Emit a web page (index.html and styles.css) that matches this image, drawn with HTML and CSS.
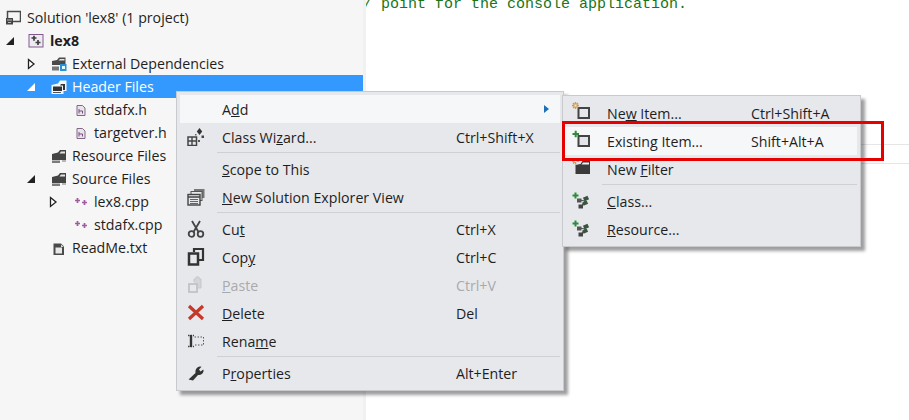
FILE: index.html
```html
<!DOCTYPE html>
<html lang="en">
<head>
<meta charset="utf-8">
<title>Solution Explorer context menu</title>
<link rel="stylesheet" href="styles.css">
</head>
<body>
<svg class="defs" aria-hidden="true">
  <symbol id="i-solution" viewBox="0 0 16 16"><path d="M2.500 8.500V1.500h13v10H8" fill="none" stroke="#4a4a4a" stroke-width="1.500"/><rect x="1" y="8" width="7" height="6.500" fill="#444"/><path d="M2 10h5M3 12.500h3" stroke="#bbb"/></symbol>
  <symbol id="i-project" viewBox="0 0 16 16"><rect x="1" y="1.500" width="14" height="12.500" fill="#ececf0" stroke="#86588f"/><path d="M3.500 5h5M6 2.800v5M7.500 9.500h5M10 7v5" stroke="#3f3f3f" stroke-width="1.700"/></symbol>
  <symbol id="i-extdep" viewBox="0 0 16 16"><path d="M1 5l5-1 2-2.500h6.500V9H1z" fill="#4a4a4a"/><path d="M7.500 4.500h6V3H9z" fill="#e4e4e4"/><path d="M1 10.500h7v4H1z" fill="#777"/><rect x="9" y="8" width="6.500" height="7" fill="#2d8fd5"/><rect x="11" y="10" width="3" height="3" fill="#dff"/></symbol>
  <symbol id="i-folder" viewBox="0 0 16 16"><path d="M1 6l6-1.500 2-2.500h6v10H1z" fill="#444"/><path d="M8.500 5.500l1.500-2h4v2z" fill="#e4e4e4"/><path d="M1 12.500h8v2.500H1z" fill="#7c7c7c"/><path d="M11 13h4" stroke="#777"/></symbol>
  <symbol id="i-folder-sel" viewBox="0 0 16 16"><path d="M.5 6l6.500-1.500 2-3h6.500V12h-3v3H.5z" fill="#f2f6fa"/><path d="M2 7.500h9v4.500H2z" fill="#333"/><path d="M10 5h4v6h-2V6.500H9z" fill="#333"/><path d="M2 13.500h8" stroke="#555"/></symbol>
  <symbol id="i-hfile" viewBox="0 0 16 16"><path d="M4 3.500h5.500l2.500 2.500v7.500H4z" fill="#e9e4ea" stroke="#7f6a85"/><path d="M6 7v4.500M9.500 9v2.500M6 9h3.500" stroke="#7b4b86"/></symbol>
  <symbol id="i-cpp" viewBox="0 0 16 16"><path d="M2 6.500h5M4.500 4v5M9 8.500h5M11.500 6v5" stroke="#a25ba0" stroke-width="1.700"/></symbol>
  <symbol id="i-txt" viewBox="0 0 16 16"><path d="M2.500 3.500H10l3 3V15H2.500z" fill="#4a4a4a"/><rect x="4.500" y="7.500" width="6.500" height="6" fill="#e8e8e8"/><path d="M10 4.500v2.500h2.500" fill="#ddd"/></symbol>
  <symbol id="i-wizard" viewBox="0 0 18 18"><path d="M12.500 0l2.700 3.500-2.700 3.500-2.700-3.500z" fill="#333"/><rect x="1" y="9" width="8.500" height="8.500" fill="none" stroke="#444" stroke-width="1.500"/><path d="M1 13h8M5 9v8" stroke="#444" stroke-width="1.400"/><rect x="14.500" y="7.500" width="2.500" height="2.500" fill="#444"/><rect x="11" y="12" width="2" height="2" fill="#555"/><rect x="8" y="6" width="1.500" height="1.500" fill="#666"/></symbol>
  <symbol id="i-newview" viewBox="0 0 18 18"><rect x="7" y="1" width="10.500" height="9" fill="#777"/><rect x="4" y="3.500" width="11" height="9" fill="#e7e8ec" stroke="#555"/><rect x="1" y="6.500" width="12" height="10.500" fill="#e7e8ec" stroke="#444" stroke-width="1.400"/><path d="M1 9h12" stroke="#444" stroke-width="1.500"/><path d="M3 11.500h8M3 13.500h8M3 15.500h8" stroke="#666"/></symbol>
  <symbol id="i-cut" viewBox="0 0 18 18"><path d="M5 1l6.500 11M13 1L6.500 12" fill="none" stroke="#444" stroke-width="1.800"/><circle cx="4.500" cy="14" r="2.800" fill="none" stroke="#444" stroke-width="1.800"/><circle cx="13.500" cy="14" r="2.800" fill="none" stroke="#444" stroke-width="1.800"/></symbol>
  <symbol id="i-copy" viewBox="0 0 18 18"><path d="M7 4V1h9v11h-5" fill="none" stroke="#333" stroke-width="2.200"/><rect x="2" y="5.500" width="9" height="11" fill="#e7e8ec" stroke="#333" stroke-width="2.500"/></symbol>
  <symbol id="i-paste" viewBox="0 0 18 18"><path d="M7 6V3h2V1h3v2h2v9h-3" fill="#d4d5d8" stroke="#c6c7ca"/><rect x="2" y="8" width="8" height="8" fill="#e7e8ec" stroke="#c2c3c6" stroke-width="1.800"/></symbol>
  <symbol id="i-delete" viewBox="0 0 18 18"><path d="M2 2l14 13M16 2L2 15" stroke="#c5392b" stroke-width="3.200"/></symbol>
  <symbol id="i-rename" viewBox="0 0 18 18"><path d="M7.500 5h9v8h-9" fill="none" stroke="#555" stroke-dasharray="1.500 1.500"/><path d="M1 3.500h6M1 14.500h6" stroke="#444" stroke-width="1.600" stroke-dasharray="1.500 1"/><path d="M4 3v12" stroke="#333" stroke-width="2.400"/></symbol>
  <symbol id="i-wrench" viewBox="0 0 18 18"><path d="M1.500 15.500l7-6.500C8 6 9.500 3 13 2.500l1.500.3-2.500 2.800 1.500 2 2.800-2 .3 1.500C16 10 13.500 11.500 11 11l-5 5.500z" fill="#333"/></symbol>
  <symbol id="i-newitem" viewBox="0 0 18 18"><rect x="6.500" y="6" width="10.500" height="10" fill="#e7e8ec" stroke="#444" stroke-width="2"/><path d="M3.500 0v2.500M3.500 4.500V7M0 3.500h2.500M4.500 3.500H7M1 1l1.500 1.500M4.500 4.500L6 6M6 1L4.500 2.500M2.500 4.500L1 6" stroke="#d49a48" stroke-width="1.400"/></symbol>
  <symbol id="i-existing" viewBox="0 0 18 18"><rect x="6.500" y="6" width="10.500" height="10" fill="#e4e5e8" stroke="#444" stroke-width="2"/><path d="M.5 4h6.500M3.700 .8v6.400" stroke="#2f8a3a" stroke-width="2"/></symbol>
  <symbol id="i-newfilter" viewBox="0 0 18 18"><path d="M3.500 7l5-1 2-3H18v13H3.500z" fill="#3a3a3a"/><path d="M9.500 6.500l1.500-2h6v2z" fill="#eee"/><path d="M3.500 0v2.500M3.500 4v2.500M0 3h2.500M4.500 3H7M1 .8l1.500 1.500M6 .8L4.500 2.300M2.500 4L1 5.500" stroke="#d49a48" stroke-width="1.400"/></symbol>
  <symbol id="i-class" viewBox="0 0 18 18"><path d="M.5 3.500h6M3.500 .5v6" stroke="#2f8a3a" stroke-width="2"/><path d="M7 8l6 1-4 6" fill="none" stroke="#555" stroke-width="1.200"/><rect x="11.500" y="4.500" width="5" height="4" transform="rotate(-25 14 6.500)" fill="#37553f"/><rect x="5" y="6.500" width="4.500" height="4" fill="#555"/><rect x="10.500" y="9.500" width="5" height="3.500" transform="rotate(-25 13 11)" fill="#37553f"/><rect x="6.500" y="12.500" width="4.500" height="4" fill="#444"/></symbol>
  <symbol id="a-open" viewBox="0 0 16 16"><path d="M12 4v8H4z"/></symbol>
  <symbol id="a-closed" viewBox="0 0 16 16"><path d="M5.500 3.500l5.500 4.500-5.500 4.500z" fill="#fff" stroke="#222" stroke-width="1.300"/></symbol>
</svg>

<div class="window">
  <aside class="tree">
    <div class="row lvl0"><span class="ic"><svg class="icon"><use href="#i-solution"/></svg></span><span>Solution 'lex8' (1 project)</span></div>
    <div class="row lvl1"><svg class="exp"><use href="#a-open"/></svg><span class="ic ic-wide"><svg class="icon"><use href="#i-project"/></svg></span><b>lex8</b></div>
    <div class="row lvl2"><svg class="exp"><use href="#a-closed"/></svg><span class="ic"><svg class="icon"><use href="#i-extdep"/></svg></span><span>External Dependencies</span></div>
    <div class="row lvl2 selected"><svg class="exp"><use href="#a-open"/></svg><span class="ic"><svg class="icon"><use href="#i-folder-sel"/></svg></span><span>Header Files</span></div>
    <div class="row lvl3"><span class="exp"></span><span class="ic"><svg class="icon"><use href="#i-hfile"/></svg></span><span>stdafx.h</span></div>
    <div class="row lvl3"><span class="exp"></span><span class="ic"><svg class="icon"><use href="#i-hfile"/></svg></span><span>targetver.h</span></div>
    <div class="row lvl2"><span class="exp"></span><span class="ic"><svg class="icon"><use href="#i-folder"/></svg></span><span>Resource Files</span></div>
    <div class="row lvl2"><svg class="exp"><use href="#a-open"/></svg><span class="ic"><svg class="icon"><use href="#i-folder"/></svg></span><span>Source Files</span></div>
    <div class="row lvl3"><svg class="exp"><use href="#a-closed"/></svg><span class="ic"><svg class="icon"><use href="#i-cpp"/></svg></span><span>lex8.cpp</span></div>
    <div class="row lvl3"><span class="exp"></span><span class="ic"><svg class="icon"><use href="#i-cpp"/></svg></span><span>stdafx.cpp</span></div>
    <div class="row lvl2"><span class="exp"></span><span class="ic"><svg class="icon"><use href="#i-txt"/></svg></span><span>ReadMe.txt</span></div>
  </aside>
  <div class="gutter"></div>
  <main class="editor">
    <div class="code">/ point for the console application.</div>
  </main>
</div>

<div class="guide guide-a"></div>
<div class="guide guide-b"></div>

<nav class="menu menu-main">
  <div class="item hot"><span class="mi"></span><span class="label">A<u>d</u>d</span><span class="key"></span><span class="arrow"></span></div>
  <div class="item"><span class="mi"><svg class="micon"><use href="#i-wizard"/></svg></span><span class="label">Class Wi<u>z</u>ard...</span><span class="key">Ctrl+Shift+X</span></div>
  <div class="sep"></div>
  <div class="item"><span class="mi"></span><span class="label"><u>S</u>cope to This</span><span class="key"></span></div>
  <div class="item"><span class="mi"><svg class="micon"><use href="#i-newview"/></svg></span><span class="label"><u>N</u>ew Solution Explorer View</span><span class="key"></span></div>
  <div class="sep"></div>
  <div class="item"><span class="mi"><svg class="micon"><use href="#i-cut"/></svg></span><span class="label">Cu<u>t</u></span><span class="key">Ctrl+X</span></div>
  <div class="item"><span class="mi"><svg class="micon"><use href="#i-copy"/></svg></span><span class="label">Cop<u>y</u></span><span class="key">Ctrl+C</span></div>
  <div class="item disabled"><span class="mi"><svg class="micon"><use href="#i-paste"/></svg></span><span class="label"><u>P</u>aste</span><span class="key">Ctrl+V</span></div>
  <div class="item"><span class="mi"><svg class="micon"><use href="#i-delete"/></svg></span><span class="label"><u>D</u>elete</span><span class="key">Del</span></div>
  <div class="item"><span class="mi"><svg class="micon"><use href="#i-rename"/></svg></span><span class="label">Rena<u>m</u>e</span><span class="key"></span></div>
  <div class="sep"></div>
  <div class="item"><span class="mi"><svg class="micon"><use href="#i-wrench"/></svg></span><span class="label">P<u>r</u>operties</span><span class="key">Alt+Enter</span></div>
</nav>

<nav class="menu menu-sub">
  <div class="item"><span class="mi"><svg class="micon"><use href="#i-newitem"/></svg></span><span class="label">Ne<u>w</u> Item...</span><span class="key">Ctrl+Shift+A</span></div>
  <div class="item hot"><span class="mi"><svg class="micon"><use href="#i-existing"/></svg></span><span class="label">Existin<u>g</u> Item...</span><span class="key">Shift+Alt+A</span></div>
  <div class="item"><span class="mi"><svg class="micon"><use href="#i-newfilter"/></svg></span><span class="label">New <u>F</u>ilter</span><span class="key"></span></div>
  <div class="sep"></div>
  <div class="item"><span class="mi"><svg class="micon"><use href="#i-class"/></svg></span><span class="label"><u>C</u>lass...</span><span class="key"></span></div>
  <div class="item"><span class="mi"><svg class="micon"><use href="#i-class"/></svg></span><span class="label"><u>R</u>esource...</span><span class="key"></span></div>
</nav>

<div class="callout"></div>
</body>
</html>
```

FILE: styles.css
```css
* { box-sizing: border-box; }
html, body { margin: 0; height: 100%; overflow: hidden; }
body {
  position: relative;
  width: 909px;
  height: 420px;
  background: #fff;
  font-family: "Open Sans", "Liberation Sans", sans-serif;
  font-size: 14.2px;
  color: #1e1e1e;
}
.defs { display: none; }

.window { display: flex; height: 420px; }
.tree { width: 363px; padding-top: 6px; background: #f6f6f6; }
.gutter { width: 3px; background: #f1f1f1; }
.editor { flex: 1; overflow: hidden; background: #fff; }
.code {
  margin: -4px 0 0 -3px;
  font-family: "Liberation Mono", "DejaVu Sans Mono", monospace;
  font-size: 15px;
  line-height: 17px;
  white-space: pre;
  color: #1a751a;
}

.row { display: flex; align-items: center; height: 23px; white-space: nowrap; }
.row b { font-weight: 700; }
.lvl0 { padding-left: 0; }
.lvl1 { padding-left: 2px; }
.lvl2 { padding-left: 23px; }
.lvl3 { padding-left: 45px; }
.exp { flex: none; width: 16px; height: 16px; fill: #222; }
.ic { flex: none; display: flex; justify-content: flex-end; width: 33px; padding-right: 5px; }
.lvl0 .ic { width: 27px; padding-right: 6px; }
.ic-wide { width: 32px; padding-right: 6px; }
.icon { width: 16px; height: 16px; display: block; }
.selected { background: #3399ff; color: #fff; }
.selected .exp { fill: #fff; }

.guide { position: absolute; left: 860px; right: 0; height: 1px; background: #e6e6e6; }
.guide-a { top: 144px; }
.guide-b { top: 163px; }

.menu {
  position: absolute;
  padding: 3px;
  background: #e7e8ec;
  border: 1px solid #c9cace;
  box-shadow: 4px 4px 3px rgba(0, 0, 0, .38);
}
.menu-main { left: 176px; top: 91px; width: 388px; height: 300px; }
.menu-sub { left: 562px; top: 95px; width: 299px; height: 152px; padding: 3px 3px 3px 1px; }
.item { position: relative; display: flex; align-items: center; height: 28px; white-space: nowrap; }
.hot { background: #f6f7f9; }
.disabled { color: #a9aaad; }
.mi { flex: none; display: flex; justify-content: center; width: 32px; }
.micon { width: 18px; height: 18px; display: block; }
.menu-sub .micon { margin-top: -4px; }
.menu-sub .sep + .item .micon, .menu-sub .sep + .item + .item .micon { margin-top: 0; }
.label { flex: none; margin-left: 10px; }
.menu-main .label { width: 234px; }
.menu-sub .label { width: 144px; }
.menu-sub .mi { width: 33px; }
.sep { height: 4px; margin-left: 37px; padding-top: 1px; }
.menu-sub .sep { margin-left: 38px; }
.sep::after { content: ""; display: block; height: 1px; background: #ced0d4; }
.arrow {
  position: absolute;
  right: 11px;
  top: 10px;
  border-left: 5px solid #1b6fb5;
  border-top: 4px solid transparent;
  border-bottom: 4px solid transparent;
}
.callout {
  position: absolute;
  left: 562px;
  top: 121px;
  width: 322px;
  height: 40px;
  border: 3px solid #e60000;
}
```
